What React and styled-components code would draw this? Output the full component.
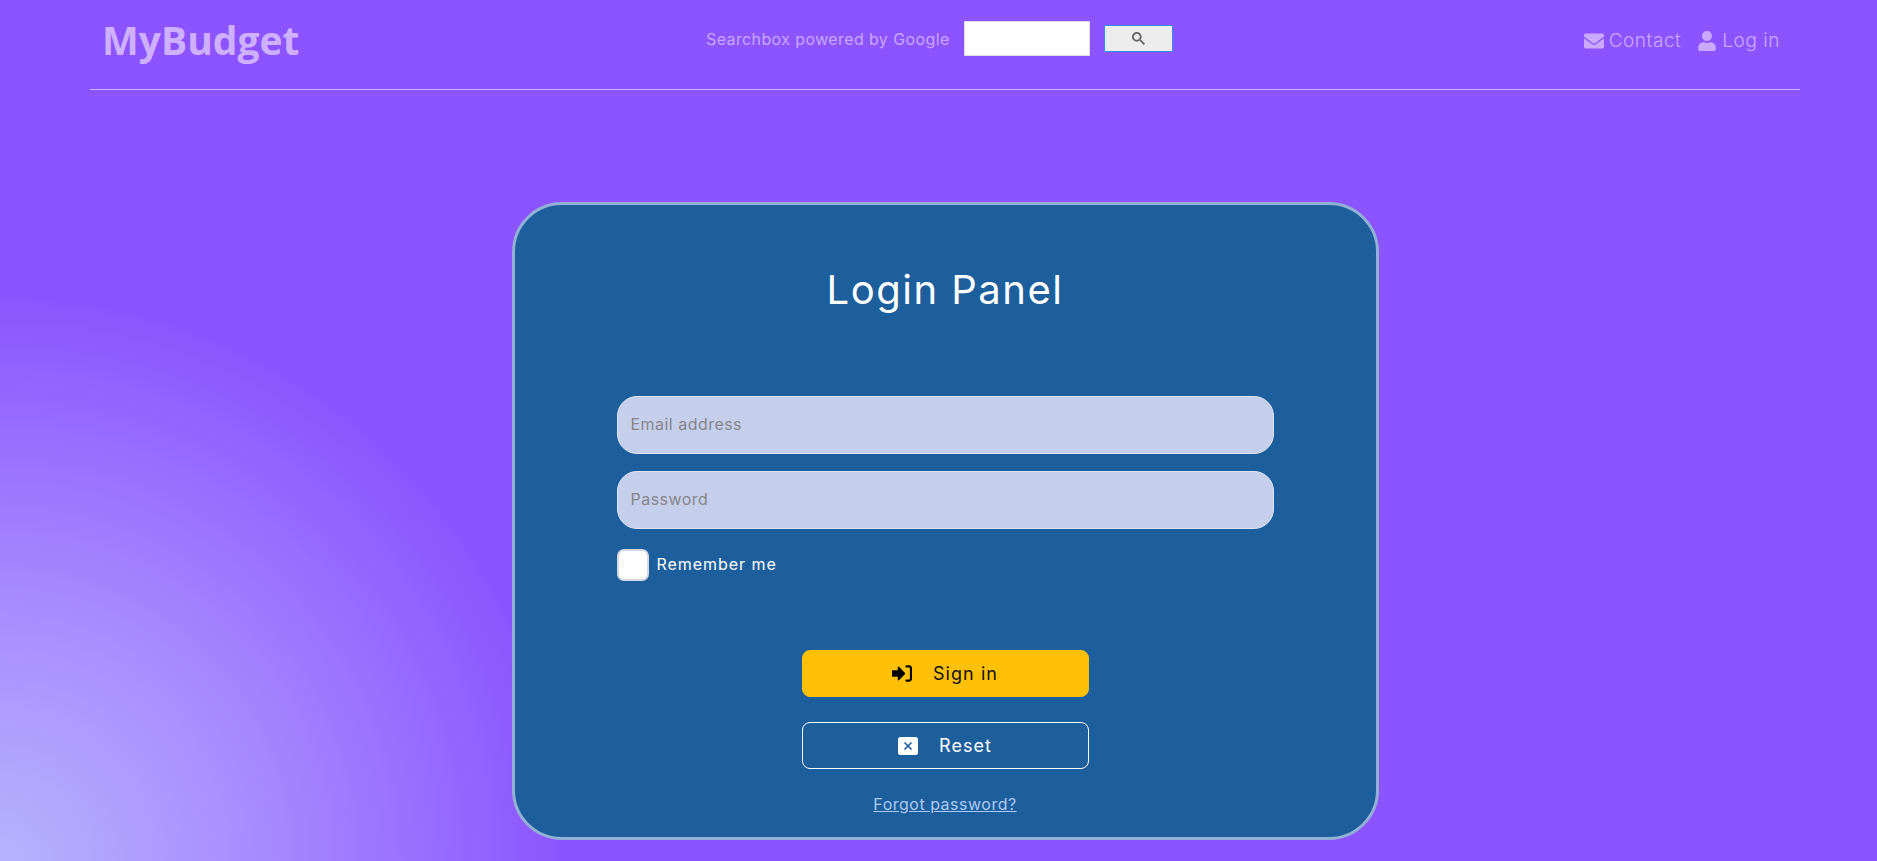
import React from "react";
import styled, { createGlobalStyle } from "styled-components";
import { FaEnvelope, FaUser } from "react-icons/fa";

const Global = createGlobalStyle`
  html, body { margin: 0; padding: 0; height: 100%; }
  body {
    overflow: hidden;
    font-family: Inter, "Liberation Sans", sans-serif;
    background-color: #8c54ff;
    background-image: radial-gradient(circle 565px at 0 861px, #b7b3fd 0%, #a78cfe 45%, #8c54ff 100%);
    background-repeat: no-repeat;
  }
  #root { height: 861px; }
`;

const Page = styled.div`
  width: 1710px;
  margin-left: 90px;
`;

const Header = styled.header`
  display: grid;
  grid-template-columns: 616px 1fr auto;
  align-items: center;
  height: 89px;
  padding-right: 20px;
  box-sizing: content-box;
  border-bottom: 1px solid rgba(255, 255, 255, 0.55);
`;

const Logo = styled.a`
  padding-left: 12px;
  font-family: "Open Sans", sans-serif;
  font-weight: 700;
  font-size: 39px;
  line-height: 1;
  color: #cfb0ff;
  position: relative;
  top: -5px;
`;

const Search = styled.form`
  display: flex;
  align-items: center;
  position: relative;
  top: -6px;
`;

const SearchLabel = styled.span`
  width: 258px;
  font-size: 16px;
  letter-spacing: 0.39px;
  color: #c9a6ff;
  white-space: nowrap;
`;

const SearchInput = styled.input`
  width: 126px;
  height: 35px;
  box-sizing: border-box;
  background: #fff;
  border: 1px solid #ddd;
  padding: 0;
  margin: 0 14px 0 0;
`;

const SearchButton = styled.button`
  width: 69px;
  height: 27px;
  box-sizing: border-box;
  padding: 0;
  display: flex;
  align-items: center;
  justify-content: center;
  background: #ededed;
  border: 1px solid #2f8fe6;
  border-radius: 1px;
`;

const Nav = styled.nav`
  display: flex;
  align-items: center;
  gap: 16px;
  position: relative;
  top: -4px;
`;

const NavLink = styled.a`
  display: flex;
  align-items: center;
  gap: 5px;
  font-size: 19px;
  font-weight: 300;
  letter-spacing: 0.55px;
  color: #cba9ff;
  svg { font-size: 20px; }
`;

const Main = styled.main`
  display: flex;
  justify-content: center;
  padding-top: 112px;
`;

const Card = styled.section`
  width: 867px;
  height: 638px;
  box-sizing: border-box;
  background: #1d5e9c;
  border: 3px solid #92b1d4;
  border-radius: 50px;
  display: flex;
  flex-direction: column;
  align-items: center;
`;

const Title = styled.h1`
  margin: 60px 0 0;
  height: 50px;
  font-size: 40px;
  line-height: 50px;
  font-weight: 400;
  letter-spacing: 1.5px;
  color: #fff;
`;

const Form = styled.form`
  width: 657px;
  margin-top: 81px;
  display: flex;
  flex-direction: column;
`;

const Field = styled.input`
  width: 100%;
  height: 58px;
  box-sizing: border-box;
  margin-bottom: 17px;
  padding: 0 13px 2px;
  border: 1px solid #dfe5f2;
  border-radius: 20px;
  background: #c5cfeb;
  font-family: inherit;
  font-size: 16px;
  letter-spacing: 0.47px;
  outline: none;
  &::placeholder { color: #85858b; opacity: 1; }
`;

const CheckRow = styled.label`
  display: flex;
  align-items: center;
  gap: 8px;
  margin-top: 3px;
  color: #fff;
  font-size: 16px;
  letter-spacing: 0.95px;
  line-height: 30px;
`;

const CheckLabel = styled.span`
  position: relative;
  top: -1px;
`;

const CheckBox = styled.span`
  width: 32px;
  height: 32px;
  box-sizing: border-box;
  background: #fff;
  border: 2px solid #d6d9e2;
  border-radius: 7px;
`;

const Actions = styled.div`
  display: flex;
  flex-direction: column;
  align-items: center;
  margin-top: 69px;
`;

const Button = styled.button`
  width: 287px;
  height: 47px;
  box-sizing: border-box;
  display: flex;
  align-items: center;
  justify-content: center;
  gap: 21px;
  margin-bottom: 25px;
  border-radius: 8px;
  font-family: inherit;
  font-size: 18px;
  letter-spacing: 1.05px;
  color: ${(p) => (p.$primary ? "#111" : "#fff")};
  background: ${(p) => (p.$primary ? "#ffc107" : "transparent")};
  border: 1px solid ${(p) => (p.$primary ? "#ffc107" : "#fff")};
`;

const Forgot = styled.a`
  margin-top: 1px;
  font-size: 16px;
  line-height: 19px;
  letter-spacing: 0.5px;
  color: #abcaf6;
  text-decoration: underline;
`;

const SignInIcon = () => (
  <svg width="20" height="18" viewBox="0 0 20 18" aria-hidden="true">
    <path
      fill="#000"
      stroke="#000"
      strokeWidth="1.4"
      strokeLinejoin="round"
      d="M0.7 6h5.8V2.2l6 6.3-6 6.3v-3.8H0.7z"
    />
    <path
      fill="none"
      stroke="#000"
      strokeWidth="2.2"
      strokeLinecap="round"
      d="M14.5 1.4h2.5a2 2 0 0 1 2 2v10.2a2 2 0 0 1-2 2h-2.5"
    />
  </svg>
);

const ResetIcon = () => (
  <svg width="20" height="18" viewBox="0 0 20 18" aria-hidden="true">
    <rect width="20" height="18" rx="2.5" fill="#fff" />
    <path stroke="#1d5e9c" strokeWidth="1.6" d="M6.5 5.5l7 7M13.5 5.5l-7 7" />
  </svg>
);

export default function App() {
  return (
    <>
      <Global />
      <Page>
        <Header>
          <Logo>MyBudget</Logo>
          <Search>
            <SearchLabel>Searchbox powered by Google</SearchLabel>
            <SearchInput aria-label="Search" />
            <SearchButton type="button" aria-label="Search">
              <svg width="13" height="13" viewBox="0 0 13 13">
                <path
                  fill="#666"
                  d="m4.8495 7.8226c0.82666 0 1.5262-0.29146 2.0985-0.87438 0.57232-0.58292 0.86378-1.2877 0.87438-2.1144 0.010599-0.82666-0.28086-1.5262-0.87438-2.0985-0.59352-0.57232-1.293-0.86378-2.0985-0.87438-0.8055-0.010599-1.5103 0.28086-2.1144 0.87438-0.60414 0.59352-0.8956 1.293-0.87438 2.0985 0.021197 0.8055 0.31266 1.5103 0.87438 2.1144 0.56172 0.60414 1.2665 0.8956 2.1144 0.87438zm4.4695 0.2115 3.681 3.6819-1.259 1.284-3.6817-3.7 0.0019784-0.69479-0.090043-0.098846c-0.87973 0.76087-1.92 1.1413-3.1207 1.1413-1.3553 0-2.5025-0.46363-3.4417-1.3909s-1.4088-2.0686-1.4088-3.4239c0-1.3553 0.4696-2.4966 1.4088-3.4239 0.9392-0.92727 2.0864-1.3969 3.4417-1.4088 1.3553-0.011889 2.4906 0.45771 3.406 1.4088 0.9154 0.95107 1.379 2.0924 1.3909 3.4239 0 1.2126-0.38043 2.2588-1.1413 3.1385l0.098834 0.090049z"
                />
              </svg>
            </SearchButton>
          </Search>
          <Nav>
            <NavLink><FaEnvelope />Contact</NavLink>
            <NavLink><FaUser />Log in</NavLink>
          </Nav>
        </Header>
        <Main>
          <Card>
            <Title>Login Panel</Title>
            <Form>
              <Field placeholder="Email address" />
              <Field placeholder="Password" />
              <CheckRow><CheckBox /><CheckLabel>Remember me</CheckLabel></CheckRow>
              <Actions>
                <Button type="button" $primary><SignInIcon />Sign in</Button>
                <Button type="button"><ResetIcon />Reset</Button>
                <Forgot>Forgot password?</Forgot>
              </Actions>
            </Form>
          </Card>
        </Main>
      </Page>
    </>
  );
}
